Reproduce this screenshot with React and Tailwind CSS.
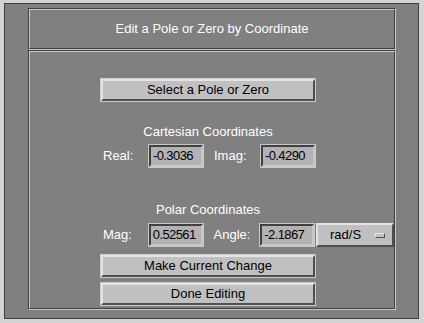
import React from 'react';

// Motif-style etched frame: dark outside top/left, light inside
const Etched = ({ className = '', children }) => (
  <div className={`border-t border-l border-b border-r border-t-[#404040] border-l-[#404040] border-b-[#c8c8c8] border-r-[#c8c8c8] ${className}`}>
    <div className="w-full h-full border-t border-l border-b border-r border-t-[#c8c8c8] border-l-[#c8c8c8] border-b-[#404040] border-r-[#404040]">
      {children}
    </div>
  </div>
);

const PushButton = ({ label }) => (
  <div className="w-[216px] h-[24px] border border-[#cccccc]">
    <div className="w-full h-full border-2 border-t-[#e4e4e4] border-l-[#e4e4e4] border-b-[#505050] border-r-[#505050] bg-[#c0c0c0] flex items-center justify-center text-[13px] text-black">
      {label}
    </div>
  </div>
);

const Field = ({ value }) => (
  <div className="w-[56px] h-[24px] border border-[#c8c8c8]">
    <div className="w-full h-full border-2 border-t-[#404040] border-l-[#404040] border-b-[#c8c8c8] border-r-[#c8c8c8] bg-[#b2b2b2] flex items-center pl-[2px] text-[13px] tracking-[-0.6px] text-black">
      {value}
    </div>
  </div>
);

const Label = ({ text, className = '' }) => (
  <div className={`flex items-center text-[13px] text-white ${className}`}>{text}</div>
);

const App = () => {
  return (
    <div
      className="w-[424px] h-[323px] bg-[#d3d3d3] pt-[3px] pl-[4px] overflow-hidden"
      style={{ fontFamily: '"Liberation Sans", Arial, sans-serif' }}
    >
      <div className="w-[415px] h-[316px] border border-[#404040] bg-[#808080] pt-[4px] pl-[23px]">
        {/* Title */}
        <Etched className="w-[368px] h-[42px]">
          <div className="w-full h-full flex items-center justify-center text-[13px] text-white">
            Edit a Pole or Zero by Coordinate
          </div>
        </Etched>

        {/* Main panel */}
        <Etched className="w-[368px] h-[260px]">
          <div className="pl-[70px] pt-[26px] flex flex-col">
            <PushButton label="Select a Pole or Zero" />

            <div className="w-[216px] mt-[22px] text-center text-[13px] leading-[15px] text-white">
              Cartesian Coordinates
            </div>
            <div className="mt-[5px] flex h-[24px]">
              <Label text="Real:" className="w-[48px] pl-[3px]" />
              <Field value="-0.3036" />
              <Label text="Imag:" className="w-[56px] pl-[10px]" />
              <Field value="-0.4290" />
            </div>

            <div className="w-[216px] mt-[34px] text-center text-[13px] leading-[15px] text-white">
              Polar Coordinates
            </div>
            <div className="mt-[6px] flex h-[24px]">
              <Label text="Mag:" className="w-[48px] pl-[3px]" />
              <Field value="0.52561" />
              <Label text="Angle:" className="w-[56px] pl-[10px]" />
              <Field value="-2.1867" />
              <div className="ml-[1px] w-[78px] h-[24px] shrink-0 border-2 border-t-[#e4e4e4] border-l-[#e4e4e4] border-b-[#505050] border-r-[#505050] bg-[#c0c0c0] flex items-center pl-[12px] text-[13px] text-black">
                <span className="w-[45px]">rad/S</span>
                <span className="w-[10px] h-[5px] border border-t-[#e4e4e4] border-l-[#e4e4e4] border-b-[#505050] border-r-[#505050] bg-[#c0c0c0]" />
              </div>
            </div>

            <div className="mt-[7px]">
              <PushButton label="Make Current Change" />
            </div>
            <div className="mt-[4px]">
              <PushButton label="Done Editing" />
            </div>
          </div>
        </Etched>
      </div>
    </div>
  );
};

export default App;
